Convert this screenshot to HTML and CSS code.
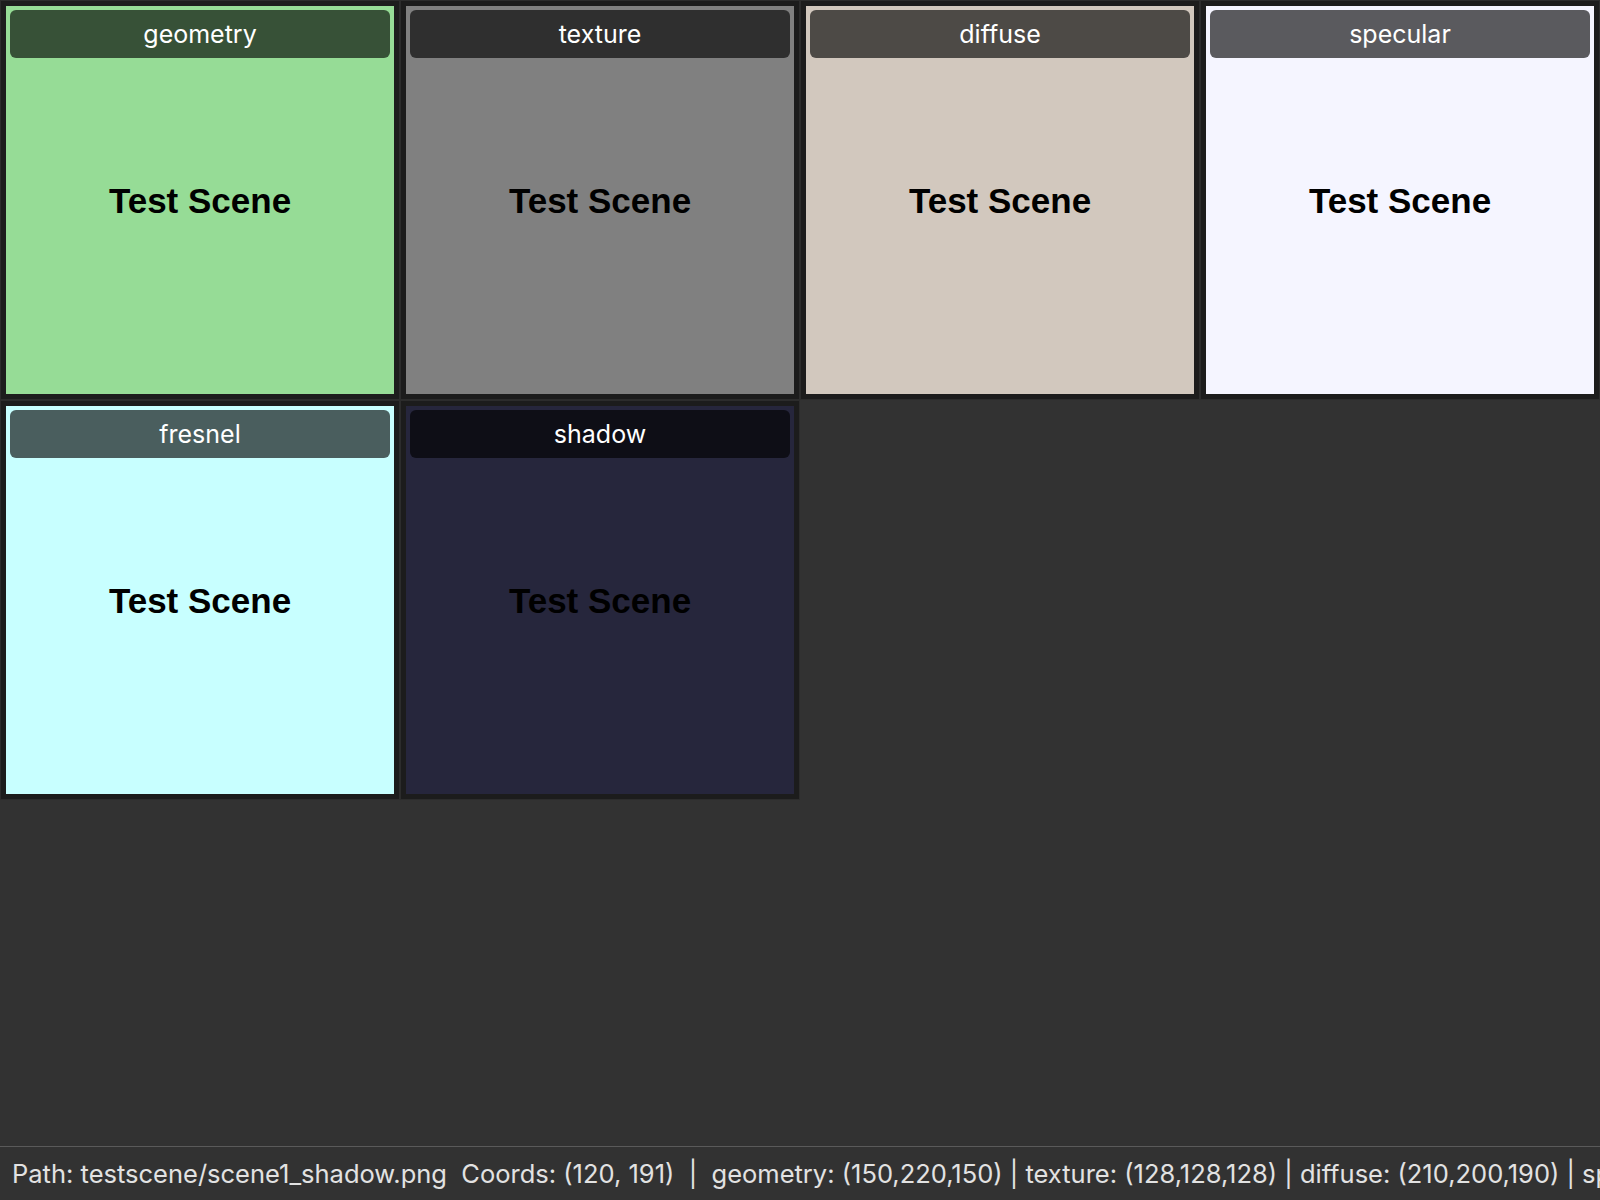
FILE: index.html
```html
<!DOCTYPE html>
<html>
<head>
<meta charset="utf-8">
<link rel="stylesheet" href="styles.css">
</head>
<body>
<div class="app">
  <div class="grid">
    <div class="tile"><div class="canvas c-geometry"><div class="label">geometry</div><div class="scene">Test Scene</div></div></div>
    <div class="tile"><div class="canvas c-texture"><div class="label">texture</div><div class="scene">Test Scene</div></div></div>
    <div class="tile"><div class="canvas c-diffuse"><div class="label">diffuse</div><div class="scene">Test Scene</div></div></div>
    <div class="tile"><div class="canvas c-specular"><div class="label">specular</div><div class="scene">Test Scene</div></div></div>
    <div class="tile"><div class="canvas c-fresnel"><div class="label">fresnel</div><div class="scene">Test Scene</div></div></div>
    <div class="tile"><div class="canvas c-shadow"><div class="label">shadow</div><div class="scene">Test Scene</div></div></div>
  </div>
  <div class="status">
    <span class="status-text">Path: testscene/scene1_shadow.png&nbsp;&nbsp;Coords: (120, 191)&nbsp;&nbsp;|&nbsp;&nbsp;geometry: (150,220,150) | texture: (128,128,128) | diffuse: (210,200,190) | specular: (245,245,255) | fresnel: (200,255,255) | shadow: (38,38,60)</span>
  </div>
</div>
</body>
</html>
```
FILE: styles.css
```css
html, body {
  margin: 0;
  padding: 0;
  background: #323232;
  overflow: hidden;
}
.app {
  width: 1600px;
  height: 1200px;
  display: flex;
  flex-direction: column;
}
.grid {
  display: grid;
  grid-template-columns: repeat(4, 400px);
  grid-auto-rows: 400px;
  flex: 1;
  align-content: start;
}
.tile {
  box-sizing: border-box;
  background: #1c1c1c;
  border: 1px solid #2c2c2c;
  padding: 5px;
}
.canvas {
  position: relative;
  width: 100%;
  height: 100%;
  display: flex;
  align-items: center;
  justify-content: center;
}
.c-geometry { background: rgb(150,220,150); }
.c-texture { background: rgb(128,128,128); }
.c-diffuse { background: rgb(210,200,190); }
.c-specular { background: rgb(245,245,255); }
.c-fresnel { background: rgb(200,255,255); }
.c-shadow { background: rgb(38,38,60); }
.label {
  position: absolute;
  top: 4px;
  left: 4px;
  right: 4px;
  height: 48px;
  border-radius: 6px;
  background: rgba(0,0,0,0.63);
  color: #ffffff;
  font-family: Inter, "Noto Sans", sans-serif;
  font-size: 25px;
  display: flex;
  align-items: center;
  justify-content: center;
}
.scene {
  font-family: "Liberation Sans", Arial, sans-serif;
  font-weight: bold;
  font-size: 35px;
  color: #000;
  line-height: 1;
}
.status {
  height: 53px;
  border-top: 1px solid #5a5a5a;
  display: flex;
  align-items: center;
  padding-left: 12px;
  white-space: nowrap;
  overflow: hidden;
}
.status-text {
  font-family: Inter, "Noto Sans", sans-serif;
  font-size: 25.5px;
  color: #e2e2e2;
}
```
